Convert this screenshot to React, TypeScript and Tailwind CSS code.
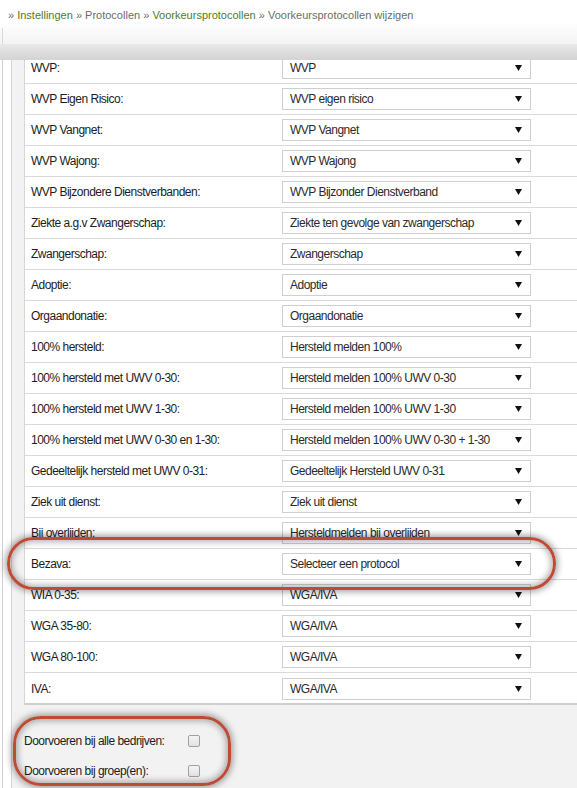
const rows: [string, string][] = [
  ['WVP:', 'WVP'],
  ['WVP Eigen Risico:', 'WVP eigen risico'],
  ['WVP Vangnet:', 'WVP Vangnet'],
  ['WVP Wajong:', 'WVP Wajong'],
  ['WVP Bijzondere Dienstverbanden:', 'WVP Bijzonder Dienstverband'],
  ['Ziekte a.g.v Zwangerschap:', 'Ziekte ten gevolge van zwangerschap'],
  ['Zwangerschap:', 'Zwangerschap'],
  ['Adoptie:', 'Adoptie'],
  ['Orgaandonatie:', 'Orgaandonatie'],
  ['100% hersteld:', 'Hersteld melden 100%'],
  ['100% hersteld met UWV 0-30:', 'Hersteld melden 100% UWV 0-30'],
  ['100% hersteld met UWV 1-30:', 'Hersteld melden 100% UWV 1-30'],
  ['100% hersteld met UWV 0-30 en 1-30:', 'Hersteld melden 100% UWV 0-30 + 1-30'],
  ['Gedeeltelijk hersteld met UWV 0-31:', 'Gedeeltelijk Hersteld UWV 0-31'],
  ['Ziek uit dienst:', 'Ziek uit dienst'],
  ['Bij overlijden:', 'Hersteldmelden bij overlijden'],
  ['Bezava:', 'Selecteer een protocol'],
  ['WIA 0-35:', 'WGA/IVA'],
  ['WGA 35-80:', 'WGA/IVA'],
  ['WGA 80-100:', 'WGA/IVA'],
  ['IVA:', 'WGA/IVA'],
]

function Select({ value }: { value: string }) {
  return (
    <div className="w-[249px] h-[22px] border border-[#cfcfcf] bg-white flex items-center justify-between pl-[7px] pr-[8px] text-[#2a2a2a]">
      <span>{value}</span>
      <svg width="7" height="6" viewBox="0 0 7 6">
        <path d="M0 0 H7 L3.5 6 Z" fill="#111" />
      </svg>
    </div>
  )
}

function Checkbox() {
  return (
    <div className="w-[12px] h-[12px] rounded-[2px] border border-[#a0a0a0] bg-gradient-to-b from-[#f4f4f4] to-[#e2e2e2]" />
  )
}

export default function App() {
  return (
    <div
      className="relative w-[577px] h-[788px] overflow-hidden bg-white"
      style={{ fontFamily: '"Liberation Sans", Arial, sans-serif' }}
    >
      {/* breadcrumb */}
      <div className="h-[44px] flex bg-gradient-to-b from-white via-white to-[#f4f4f4]">
        <div className="w-[2px]" />
        <div className="flex-1 mt-[28px] border-l border-[#d8d8d8]" />
      </div>
      <div className="absolute left-[8px] top-[7px] text-[11px] text-[#6b6b6b]">
        » <span className="text-[#4f7a2a]">Instellingen</span> » <span>Protocollen</span> »{' '}
        <span className="text-[#4f7a2a]">Voorkeursprotocollen</span> » <span>Voorkeursprotocollen wijzigen</span>
      </div>
      <div className="h-[16px] bg-gradient-to-b from-[#e9e9e9] to-[#d3d3d3]" />

      <div className="flex h-[728px]">
        <div className="w-[2px] bg-white" />
        <div className="w-[9px] border-l border-[#d0d0d0] bg-white" />
        <div className="flex-1 border-l border-[#d6d6d6] bg-[#f2f2f2] pl-[12px] flex flex-col text-[12px] tracking-[-0.5px] text-[#1c1c24]">
          <div className="h-[645px] overflow-hidden bg-white border-l border-[#d6d6d6] border-b-2 border-b-[#cfcfcf]">
            <div className="-mt-[7px]">
              {rows.map(([label, value], i) => (
                <div
                  key={i}
                  className={`h-[31px] flex items-center ${
                    i < rows.length - 1 ? 'border-b border-[#dadada]' : ''
                  }`}
                >
                  <div className="w-[257px] pl-[6px]">{label}</div>
                  <Select value={value} />
                </div>
              ))}
            </div>
          </div>

          <div className="pt-[29px] flex flex-col gap-[16px]">
            <div className="h-[14px] flex items-center">
              <span className="w-[164px]">Doorvoeren bij alle bedrijven:</span>
              <Checkbox />
            </div>
            <div className="h-[14px] flex items-center">
              <span className="w-[164px]">Doorvoeren bij groep(en):</span>
              <Checkbox />
            </div>
          </div>
        </div>
      </div>

      {/* annotation highlights */}
      <div className="absolute left-[7px] top-[537px] w-[549px] h-[53px] rounded-[27px] border-[3px] border-[#bf4a36] shadow-[0_0_6px_2px_rgba(0,0,0,0.35),inset_0_0_6px_2px_rgba(0,0,0,0.3)]" />
      <div className="absolute left-[13px] top-[716px] w-[218px] h-[70px] rounded-[28px] border-[3px] border-[#bf4a36] shadow-[0_0_6px_2px_rgba(0,0,0,0.35),inset_0_0_6px_2px_rgba(0,0,0,0.3)]" />
    </div>
  )
}
